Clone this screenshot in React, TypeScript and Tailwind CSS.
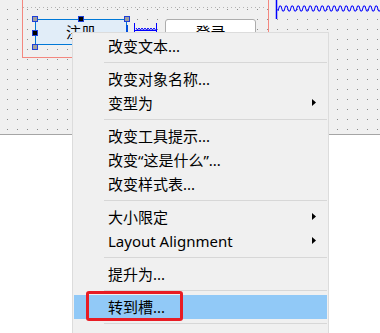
import React from 'react';

type MenuEntry = { label: string; arrow?: boolean; active?: boolean } | 'sep';

const entries: MenuEntry[] = [
  { label: '改变文本...' },
  'sep',
  { label: '改变对象名称...' },
  { label: '变型为', arrow: true },
  'sep',
  { label: '改变工具提示...' },
  { label: '改变“这是什么”...' },
  { label: '改变样式表...' },
  'sep',
  { label: '大小限定', arrow: true },
  { label: 'Layout Alignment', arrow: true },
  'sep',
  { label: '提升为...' },
  'sep',
  { label: '转到槽...', active: true },
  'sep',
  { label: '' },
];

// selection handles drawn around the selected widget (box 92x26, handles on its edges)
function Handles() {
  const pts: [number, number, boolean][] = [
    [2, 2, false],
    [48, 2, true],
    [94, 2, false],
    [2, 16, true],
    [2, 30, false],
  ];
  return (
    <svg className="absolute left-[-3px] top-[-3px] overflow-visible pointer-events-none" width={98} height={32}>
      {pts.map(([x, y, dark], i) => (
        <rect
          key={i}
          x={x - 2.5}
          y={y - 2.5}
          width={5}
          height={5}
          fill={dark ? '#000000' : '#a0a0a0'}
          stroke="#1f3fd8"
          strokeWidth={1}
        />
      ))}
    </svg>
  );
}

function Spacer() {
  return (
    <svg className="ml-[7px] mt-[4px] shrink-0" width={23} height={10}>
      <line x1={0.5} y1={0} x2={0.5} y2={10} stroke="#0000ff" />
      <line x1={22.5} y1={0} x2={22.5} y2={10} stroke="#0000ff" />
      <line x1={1} y1={7.5} x2={22} y2={7.5} stroke="#0000ff" />
      <polyline
        fill="none"
        stroke="#0000ff"
        points={Array.from({ length: 7 }, (_, i) => `${2 + i * 3},5 ${3.5 + i * 3},7`).join(' ')}
      />
    </svg>
  );
}

function Canvas() {
  return (
    <div className="relative h-[135px] bg-[#f0f0f0] border-b border-[#a5a5a5]">
      {/* designer grid and the spacer at the top right */}
      <svg className="absolute inset-0" width={380} height={134}>
        <defs>
          <pattern id="grid" x={0} y={0} width={10} height={10} patternUnits="userSpaceOnUse">
            <rect x={7} y={9} width={1} height={1} fill="#8c8c8c" />
          </pattern>
        </defs>
        <rect width={380} height={134} fill="url(#grid)" />
        <line x1={23} y1={7.5} x2={267} y2={7.5} stroke="#b4b4b4" strokeDasharray="1 3" />
        <line x1={276.5} y1={0} x2={276.5} y2={19} stroke="#0000ff" strokeWidth={1.5} />
        <polyline
          fill="none"
          stroke="#0000ff"
          strokeWidth={1}
          points={Array.from({ length: 36 }, (_, i) => `${278 + i * 3},${i % 2 ? 6 : 11} ${279.5 + i * 3},${i % 2 ? 11 : 6}`).join(' ')}
        />
      </svg>

      {/* horizontal layout frame */}
      <div className="absolute left-[22px] top-[-10px] w-[247px] h-[68px] border border-[#f4877f] flex items-start pl-[12px] pt-[28px]">
        <div className="relative w-[92px] h-[26px] shrink-0 flex items-center justify-center bg-[#e1edf8] border border-[#0078d7] text-[15px] text-black">
          注册
          <Handles />
          <div className="absolute right-[-2px] top-[5px] w-[2px] h-[8px] bg-[#0050e0]" />
        </div>
        <Spacer />
        <div className="ml-[8px] w-[91px] h-[26px] shrink-0 flex items-center justify-center bg-white border border-[#adadad] rounded-[3px] text-[15px] text-black">
          登录
        </div>
      </div>
    </div>
  );
}

function ContextMenu() {
  return (
    <div className="absolute left-[72px] top-[32px] w-[257px] bg-[#f0f0f0] border border-[#dcdcdc] p-px text-[15px] text-black">
      {entries.map((e, i) =>
        e === 'sep' ? (
          <div key={i} className="h-[9px] flex items-center pl-[30px]">
            <div className="h-px w-full bg-[#d7d7d7]" />
          </div>
        ) : (
          <div
            key={i}
            className={`relative h-6 flex items-center pl-[34px] pt-px whitespace-nowrap ${e.active ? 'bg-[#91c9f7]' : ''}`}
          >
            {e.label}
            {e.arrow && (
              <svg className="absolute right-[11px] top-[8px]" width={4} height={7} viewBox="0 0 4 7">
                <polygon points="0,0 4,3.5 0,7" fill="#000" />
              </svg>
            )}
          </div>
        ),
      )}
    </div>
  );
}

export default function App() {
  return (
    <div className="relative w-[380px] h-[333px] overflow-hidden bg-white font-['Noto_Sans','Noto_Sans_CJK_SC',sans-serif]">
      <Canvas />
      <ContextMenu />
      <div className="absolute left-[86px] top-[291px] w-[97px] h-[30px] border-[3px] border-[#e81c24] rounded-[3px]" />
    </div>
  );
}
